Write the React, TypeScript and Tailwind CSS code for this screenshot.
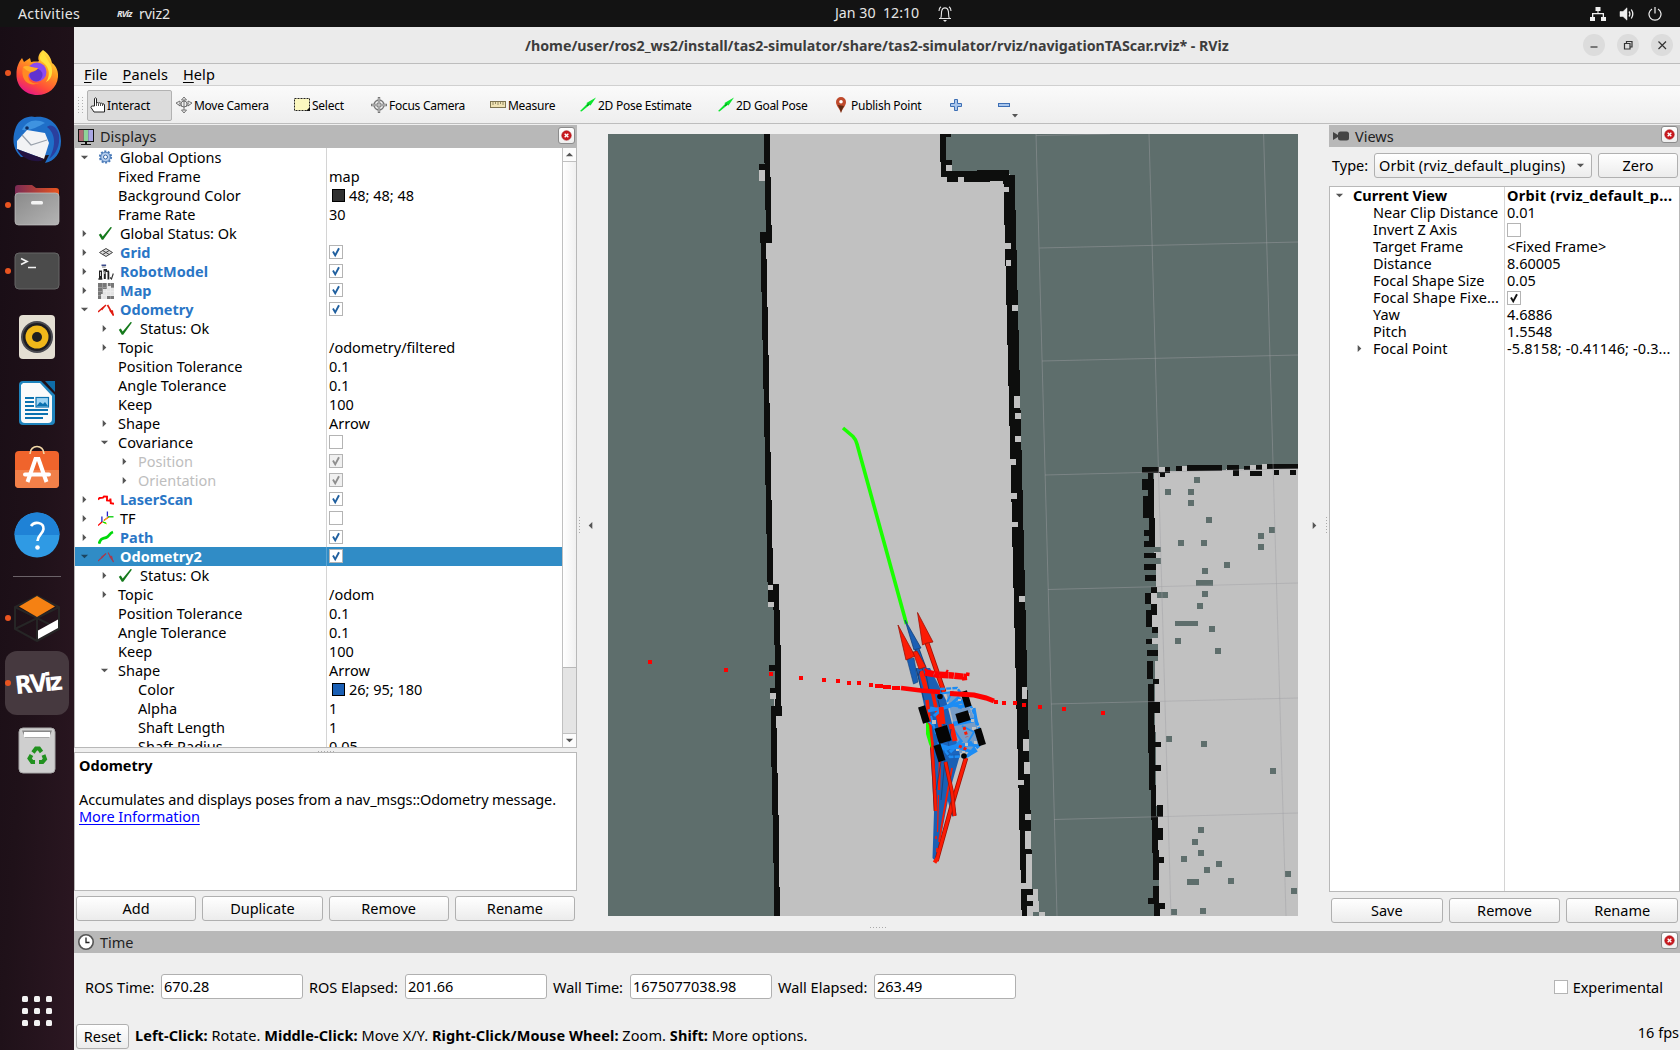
import React from 'react';

type Rect = [number, number, number, number];

/* ---------- small shared pieces ---------- */

function Tri({ dir, cls = 'fill-[#555]' }: { dir: 'right' | 'down' | 'left' | 'up'; cls?: string }) {
  const d = {
    right: 'M3 1 L7 5 L3 9Z',
    left: 'M7 1 L3 5 L7 9Z',
    down: 'M1 3 L9 3 L5 7Z',
    up: 'M1 7 L9 7 L5 3Z',
  }[dir];
  return (
    <svg viewBox="0 0 10 10" className={`h-[9px] w-[9px] shrink-0 ${cls}`}>
      <path d={d} />
    </svg>
  );
}

function Check({ on, tone = 'blue' }: { on: boolean; tone?: 'blue' | 'grey' | 'black' }) {
  const stroke = { blue: '#1f5f9f', grey: '#8e8e8e', black: '#111' }[tone];
  return (
    <span className={`block h-[14px] w-[14px] shrink-0 border border-[#b4b4b4] ${tone === 'grey' ? 'bg-[#f0f0f0]' : 'bg-white'}`}>
      {on && (
        <svg viewBox="0 0 12 12" className="h-3 w-3">
          <path d="M3 5.6 L5.2 9.4 L9 2.2" fill="none" stroke={stroke} strokeWidth="1.9" />
        </svg>
      )}
    </span>
  );
}

function Button({ label, cls }: { label: string; cls: string }) {
  return (
    <button className={`flex h-[25px] items-center justify-center rounded-[3px] border border-[#b0b0b0] bg-gradient-to-b from-white to-[#ececec] ${cls}`}>
      {label}
    </button>
  );
}

function CloseButton() {
  return (
    <span className="mb-[3px] flex h-[17px] w-[17px] items-center justify-center rounded-[3px] border border-[#8c8c8c] bg-gradient-to-b from-white to-[#eee]">
      <svg viewBox="0 0 12 12" className="h-[11px] w-[11px]">
        <circle cx="6" cy="6" r="5.2" fill="#c9191e" stroke="#a40f12" strokeWidth=".6" />
        <path d="M4 4 L8 8 M8 4 L4 8" stroke="#fff" strokeWidth="1.5" />
      </svg>
    </span>
  );
}

function PanelTitle({ icon, title, cls = 'h-[22px]' }: { icon: React.ReactNode; title: string; cls?: string }) {
  return (
    <div className={`flex shrink-0 items-center bg-[#b8b8b8] pl-[3px] pr-[2px] text-[#222] ${cls}`}>
      {icon}
      <span className="ml-[5px] flex-1">{title}</span>
      <CloseButton />
    </div>
  );
}

/* ---------- display type icons ---------- */

const box = 'h-4 w-4 shrink-0';

const icons: Record<string, React.ReactNode> = {
  gear: (
    <svg viewBox="0 0 16 16" className={box}>
      <circle cx="7.5" cy="7" r="5.6" fill="#a9c3e8" stroke="#4a7ab8" strokeWidth="2" strokeDasharray="2 1.5" />
      <circle cx="7.5" cy="7" r="4.6" fill="#b8d0f0" stroke="#4878b4" strokeWidth=".8" />
      <circle cx="7.5" cy="7" r="2" fill="#fff" stroke="#3465a4" strokeWidth="1" />
    </svg>
  ),
  ok: (
    <svg viewBox="0 0 16 16" className={box}>
      <path d="M.8 8.8 L2.8 7.6 L4.7 10.4 L12.6 1 L14 1.4 L5.2 13.8 L3.8 13.8Z" fill="#157a1c" />
    </svg>
  ),
  grid: (
    <svg viewBox="0 0 16 16" className={box}>
      <path d="M1.5 7.5 L8 3.5 L14.5 7.5 L8 11.5Z M4.7 5.5 L11.2 9.5 M11.2 5.5 L4.7 9.5" fill="#ddd" stroke="#444" strokeWidth="1" />
    </svg>
  ),
  robot: (
    <svg viewBox="0 0 16 16" className={box}>
      <path d="M3.5 .5 h4.600 v1.600 h-4.600z" fill="#3a4a8a" />
      <path d="M4 2 h3.600 v2 h-3.600z" fill="#bbb" />
      <path d="M1 6.500 h3 v9 h-3z M5.500 5 h3.500 v3 h-3.500z M5.800 8 h2 v7 h-2z M9.500 7.500 h1.800 v8 h-1.800z M8 6.500 h3 v1.500 h-3z" fill="#222" />
      <path d="M2.500 8 v4 M6.800 7 v3" stroke="#ccc" strokeWidth="1" />
      <path d="M0 15 h4.500 M12 13.500 l1.500 1.500 l1.800-5.500" fill="none" stroke="#333" strokeWidth="1.100" />
    </svg>
  ),
  map: (
    <svg viewBox="0 0 16 16" className={box} shapeRendering="crispEdges">
      <path d="M0 0h16v16H0z" fill="#e4e4e4" />
      <path d="M0 0h9v6H5v5H3v5H0z M10 0h6v5h-3v-2h-3z M9 13h7v3H9z" fill="#777" />
      <path d="M4 0v16M8 0v16M12 0v16M0 4h16M0 8h16M0 12h16" stroke="#fff" strokeOpacity=".25" />
    </svg>
  ),
  odom: (
    <svg viewBox="0 0 16 16" className={box}>
      <path d="M0 10 L8 3" stroke="#e01b10" strokeWidth="1.4" />
      <path d="M4 8.6 L3 6.6 L8.5 2.8Z M11 8.5 L15.8 14 L15 8.2Z" fill="#e01b10" />
      <path d="M9.5 3 L15.500 13.500" stroke="#e01b10" strokeWidth="1.6" />
    </svg>
  ),
  odomDim: (
    <svg viewBox="0 0 16 16" className={box}>
      <path d="M0 12 L8 4.5 M10 3.5 L15.5 13" stroke="#a63c50" strokeWidth="1.2" />
      <path d="M3.5 10 L3.4 7.6 L8.5 4Z M11 7.5 L14 6.8 L15.8 13.5Z" fill="#a63c50" />
    </svg>
  ),
  laser: (
    <svg viewBox="0 0 16 16" className={box}>
      <path d="M0 7.500 L1.500 6 L5 5.600 L6 4.400 L9 4.600 L9 8.500 L12 8.800 L12.400 6.600 L12.800 11.200 L16 11.800" fill="none" stroke="#f00" strokeWidth="1.900" />
    </svg>
  ),
  tf: (
    <svg viewBox="0 0 16 16" className={box}>
      <path d="M0 14.5 L4.5 10.5 M6 9.6 L10.8 5.8" stroke="#f00" strokeWidth="1.3" />
      <path d="M10 5.8 H15.5" stroke="#0c0" strokeWidth="1.3" />
      <path d="M9.4 .6 V5.5 M3.9 5.6 V11" stroke="#22c" strokeWidth="1.3" />
      <path d="M4.5 11 L9 13 M5.5 10 L10.5 6" stroke="#dd0" strokeWidth="1" />
      <path d="M5 11 L8 12.2" stroke="#0d0" strokeWidth="1.3" />
    </svg>
  ),
  path: (
    <svg viewBox="0 0 16 16" className={box}>
      <path d="M1 13.8 C2.500 7.500 5 8.800 8 7.600 C12 6 11 3.400 15 2" fill="none" stroke="#00d80a" strokeWidth="2.8" />
    </svg>
  ),
};

/* ---------- displays tree ---------- */

type Row = {
  l: 0 | 1 | 2;
  name: string;
  a?: 'right' | 'down';
  icon?: string;
  v?: string;
  c?: boolean;
  sw?: string;
  style?: 'link' | 'sel' | 'dim';
};

const rows: Row[] = [
  { l: 0, name: 'Global Options', a: 'down', icon: 'gear' },
  { l: 1, name: 'Fixed Frame', v: 'map' },
  { l: 1, name: 'Background Color', v: '48; 48; 48', sw: 'bg-[#303030]' },
  { l: 1, name: 'Frame Rate', v: '30' },
  { l: 0, name: 'Global Status: Ok', a: 'right', icon: 'ok' },
  { l: 0, name: 'Grid', a: 'right', icon: 'grid', c: true, style: 'link' },
  { l: 0, name: 'RobotModel', a: 'right', icon: 'robot', c: true, style: 'link' },
  { l: 0, name: 'Map', a: 'right', icon: 'map', c: true, style: 'link' },
  { l: 0, name: 'Odometry', a: 'down', icon: 'odom', c: true, style: 'link' },
  { l: 1, name: 'Status: Ok', a: 'right', icon: 'ok' },
  { l: 1, name: 'Topic', a: 'right', v: '/odometry/filtered' },
  { l: 1, name: 'Position Tolerance', v: '0.1' },
  { l: 1, name: 'Angle Tolerance', v: '0.1' },
  { l: 1, name: 'Keep', v: '100' },
  { l: 1, name: 'Shape', a: 'right', v: 'Arrow' },
  { l: 1, name: 'Covariance', a: 'down', c: false },
  { l: 2, name: 'Position', a: 'right', c: true, style: 'dim' },
  { l: 2, name: 'Orientation', a: 'right', c: true, style: 'dim' },
  { l: 0, name: 'LaserScan', a: 'right', icon: 'laser', c: true, style: 'link' },
  { l: 0, name: 'TF', a: 'right', icon: 'tf', c: false },
  { l: 0, name: 'Path', a: 'right', icon: 'path', c: true, style: 'link' },
  { l: 0, name: 'Odometry2', a: 'down', icon: 'odomDim', c: true, style: 'sel' },
  { l: 1, name: 'Status: Ok', a: 'right', icon: 'ok' },
  { l: 1, name: 'Topic', a: 'right', v: '/odom' },
  { l: 1, name: 'Position Tolerance', v: '0.1' },
  { l: 1, name: 'Angle Tolerance', v: '0.1' },
  { l: 1, name: 'Keep', v: '100' },
  { l: 1, name: 'Shape', a: 'down', v: 'Arrow' },
  { l: 2, name: 'Color', v: '26; 95; 180', sw: 'bg-[#1a5fb4]' },
  { l: 2, name: 'Alpha', v: '1' },
  { l: 2, name: 'Shaft Length', v: '1' },
  { l: 2, name: 'Shaft Radius', v: '0.05' },
];

const indent = ['pl-0', 'pl-5', 'pl-10'];

function TreeRow({ r }: { r: Row }) {
  const text =
    r.style === 'link' ? 'font-bold text-[#2a76c6]' : r.style === 'sel' ? 'font-bold text-white' : r.style === 'dim' ? 'text-[#bebebe]' : '';
  return (
    <div className={`flex h-[19px] shrink-0 items-center whitespace-nowrap ${r.style === 'sel' ? 'bg-[#308cc6]' : ''}`}>
      <div className={`flex h-full w-[251px] items-center ${indent[r.l]}`}>
        <span className="mr-1 flex w-[19px] justify-center">
          {r.a && <Tri dir={r.a} cls={r.style === 'sel' ? 'fill-[#1c4560]' : 'fill-[#555]'} />}
        </span>
        {r.icon && <span className="mr-1.5">{icons[r.icon]}</span>}
        <span className={text}>{r.name}</span>
      </div>
      <div className={`flex h-full flex-1 items-center border-l pl-[2px] ${r.style === 'sel' ? 'border-[#5aa4d3]' : 'border-[#d4d4d4]'}`}>
        {r.c !== undefined && <span className="mb-px"><Check on={r.c} tone={r.style === 'dim' ? 'grey' : 'blue'} /></span>}
        {r.sw && <span className={`ml-[3px] mr-1 h-[13px] w-[13px] border border-black ${r.sw}`} />}
        {r.v}
      </div>
    </div>
  );
}

function Dots({ cls }: { cls: string }) {
  return (
    <div className={`flex gap-[2px] ${cls}`}>
      {[0, 1, 2, 3, 4, 5].map((i) => (
        <span key={i} className="h-px w-px bg-[#aaa]" />
      ))}
    </div>
  );
}

function DisplaysPanel() {
  return (
    <div className="flex w-[503px] shrink-0 flex-col">
      <PanelTitle
        cls="h-[23px]"
        title="Displays"
        icon={
          <svg viewBox="0 0 18 18" className="h-[18px] w-[18px]">
            <rect x="1" y="1" width="16" height="13" fill="#111" />
            <rect x="2" y="2" width="4.700" height="11" fill="#b06a74" />
            <rect x="6.700" y="2" width="4.600" height="11" fill="#8fd39a" />
            <rect x="11.300" y="2" width="4.700" height="11" fill="#a9a6e4" />
            <path d="M8 14h2v2h4v1H4v-1h4z" fill="#111" />
          </svg>
        }
      />
      <div className="flex h-[600px] shrink-0 border-b border-l border-r border-[#b8b8b8] bg-white">
        <div className="flex flex-1 flex-col overflow-hidden">
          {rows.map((r, i) => (
            <TreeRow key={i} r={r} />
          ))}
        </div>
        <div className="flex w-[14px] flex-col border-l border-[#c0c0c0] bg-[#e4e4e4]">
          <div className="flex h-[14px] items-center justify-center border-b border-[#c0c0c0] bg-[#fcfcfc]">
            <Tri dir="up" />
          </div>
          <div className="h-[506px] border-b border-[#b8b8b8] bg-gradient-to-r from-white to-[#f0f0f0]" />
          <div className="flex-1" />
          <div className="flex h-[14px] items-center justify-center border-t border-[#c0c0c0] bg-[#fcfcfc]">
            <Tri dir="down" />
          </div>
        </div>
      </div>
      <Dots cls="h-[4px] items-end justify-center" />
      <div className="h-[139px] shrink-0 border border-[#b8b8b8] bg-white pl-1 pt-[4px] leading-[17px]">
        <div className="font-bold">Odometry</div>
        <div className="mt-[17px] whitespace-nowrap tracking-[-0.11px]">
          Accumulates and displays poses from a nav_msgs::Odometry message.
        </div>
        <a className="tracking-[-0.05px] text-[#0000ff] underline underline-offset-2">More Information</a>
      </div>
      <div className="mt-[5px] flex gap-[6px] pl-[2px] pr-[2px]">
        {['Add', 'Duplicate', 'Remove', 'Rename'].map((b) => (
          <Button key={b} label={b} cls="flex-1" />
        ))}
      </div>
    </div>
  );
}

/* ---------- 3D viewport ---------- */

const G = '#c1c1c1';
const K = '#0d0e0d';
const T = '#5e6e6c';

const leftWall: Rect[] = [
  [764, 134, 770, 163], [765, 163, 770, 177], [765, 177, 771, 210], [766, 210, 771, 225], [766, 225, 772, 232],
  [759, 164, 765, 170], [760, 232, 772, 243], [761, 243, 766, 259], [761, 259, 767, 292], [762, 292, 767, 307],
  [762, 307, 768, 340], [763, 340, 768, 355], [763, 355, 769, 389], [764, 389, 769, 403], [764, 403, 770, 437],
  [765, 437, 770, 452], [765, 452, 771, 485], [766, 485, 771, 500], [766, 500, 772, 534], [767, 534, 772, 548],
  [767, 548, 773, 582], [768, 582, 773, 607], [773, 584, 779, 610], [774, 610, 780, 645], [775, 645, 781, 706],
  [769, 665, 775, 671], [770, 688, 776, 693], [771, 706, 782, 716], [771, 716, 776, 728], [771, 728, 777, 767],
  [772, 767, 777, 773], [772, 773, 778, 815], [773, 815, 779, 863], [774, 863, 779, 887], [774, 887, 780, 916],
];
const rightWall: Rect[] = [
  [940, 134, 946, 162], [946, 134, 951, 137], [941, 160, 946, 177], [946, 160, 952, 165], [941, 171, 1009, 177],
  [977, 170, 1009, 172], [947, 177, 990, 182], [990, 177, 1003, 181], [1003, 175, 1015, 184], [1004, 184, 1015, 210],
  [1004, 210, 1016, 225], [1005, 225, 1016, 250], [1005, 250, 1017, 266], [1006, 266, 1017, 290], [1006, 290, 1018, 305],
  [1007, 305, 1018, 330], [1007, 330, 1019, 345], [1008, 345, 1019, 370], [1008, 370, 1020, 386], [1009, 386, 1020, 410],
  [1009, 410, 1021, 426], [1010, 426, 1021, 450], [1010, 450, 1022, 465], [1011, 465, 1022, 490], [1011, 490, 1023, 502],
  [1012, 502, 1023, 530], [1012, 530, 1024, 547], [1013, 547, 1024, 570], [1013, 570, 1025, 588], [1014, 588, 1025, 610],
  [1014, 610, 1026, 628], [1015, 628, 1026, 650], [1015, 650, 1027, 668], [1016, 668, 1027, 690], [1016, 690, 1028, 709],
  [1017, 709, 1028, 730], [1017, 730, 1029, 749], [1018, 749, 1029, 770], [1018, 770, 1030, 788], [1019, 788, 1030, 810],
  [1019, 810, 1031, 830], [1020, 830, 1031, 850], [1020, 850, 1032, 870], [1021, 870, 1027, 883], [1021, 889, 1033, 895],
  [1021, 895, 1027, 910], [1022, 906, 1027, 916], [1027, 901, 1033, 906],
];
const notches: Rect[] = [
  [759, 170, 765, 181], [768, 585, 773, 590], [768, 602, 774, 607], [770, 693, 776, 699],
  [946, 165, 952, 171], [958, 177, 964, 182], [1004, 187, 1009, 192], [1005, 243, 1011, 249], [1006, 260, 1011, 266],
  [1012, 305, 1018, 311], [1014, 396, 1020, 408], [1015, 413, 1021, 419], [1015, 436, 1021, 442], [1010, 459, 1016, 465],
  [1011, 493, 1017, 499], [1012, 522, 1018, 527], [1019, 596, 1025, 602], [1022, 687, 1027, 699], [1023, 739, 1029, 751],
  [1024, 762, 1030, 774], [1018, 780, 1024, 785], [1025, 814, 1031, 820], [1025, 831, 1031, 849], [1026, 854, 1032, 889],
  [1021, 883, 1027, 889],
];
const rightGrey: Rect[] = [[1022, 889, 1038, 901], [1027, 901, 1039, 916], [1039, 912, 1045, 916]];
const roomWall: Rect[] = [
  [1142, 467, 1170, 473], [1160, 473, 1165, 477], [1176, 466, 1182, 471], [1187, 465, 1222, 471], [1227, 465, 1239, 470],
  [1233, 470, 1239, 476], [1244, 466, 1250, 470], [1256, 465, 1262, 470], [1250, 471, 1262, 476], [1267, 464, 1298, 469],
  [1274, 470, 1279, 475], [1290, 470, 1296, 475], [1148, 473, 1153, 479], [1142, 479, 1154, 490], [1143, 490, 1154, 518],
  [1149, 518, 1155, 530], [1144, 530, 1155, 547], [1144, 553, 1156, 558], [1144, 564, 1156, 570], [1145, 575, 1156, 581],
  [1151, 587, 1157, 593], [1145, 593, 1151, 604], [1151, 604, 1157, 615], [1146, 610, 1152, 627], [1152, 627, 1158, 633],
  [1146, 639, 1152, 644], [1147, 650, 1158, 656], [1147, 661, 1153, 679], [1153, 679, 1159, 684], [1148, 684, 1154, 753],
  [1148, 702, 1160, 713], [1155, 742, 1161, 747], [1149, 725, 1155, 790], [1155, 765, 1161, 771], [1151, 785, 1156, 820],
  [1157, 805, 1163, 817], [1152, 816, 1158, 853], [1157, 828, 1163, 840], [1153, 850, 1159, 880], [1158, 857, 1164, 863],
  [1153, 886, 1159, 904], [1148, 898, 1153, 904], [1154, 903, 1160, 916], [1159, 903, 1165, 909],
];
const roomTeal: Rect[] = [
  [1142, 490, 1148, 496], [1144, 536, 1149, 541], [1140, 547, 1161, 552], [1140, 558, 1161, 564], [1140, 570, 1156, 575],
  [1140, 581, 1156, 587], [1157, 592, 1168, 598], [1140, 633, 1158, 639], [1152, 644, 1158, 650], [1140, 656, 1158, 661],
  [1153, 880, 1159, 886], [1196, 580, 1213, 586], [1175, 621, 1198, 626], [1187, 879, 1199, 885],
];
const roomGrey: Rect[] = [
  [1159, 467, 1165, 472], [1182, 466, 1187, 471], [1250, 465, 1256, 470], [1262, 464, 1267, 469],
  [1151, 593, 1157, 604], [1152, 615, 1158, 627], [1152, 638, 1158, 644],
];
const specks: [number, number][] = [
  [1194, 477], [1165, 489], [1188, 489], [1188, 500], [1206, 517], [1178, 540], [1201, 540], [1258, 533], [1258, 544],
  [1269, 527], [1224, 562], [1202, 568], [1202, 591], [1197, 603], [1209, 626], [1175, 638], [1215, 648], [1166, 736],
  [1201, 741], [1270, 768], [1198, 827], [1192, 839], [1198, 850], [1181, 856], [1216, 861], [1204, 867], [1228, 878],
  [1285, 871], [1291, 888], [1171, 909], [1200, 908],
];
const gridLines: Rect[] = [
  [1036, 134, 1057, 916], [1149, 134, 1171, 916], [1263.6, 134, 1286, 916], [1036, 135.6, 1110, 134], [1039.5, 248, 1298, 242],
  [1042, 361, 1298, 355], [1045, 475, 1298, 468.5], [1048, 589.5, 1298, 583], [1051, 704, 1298, 698], [1054, 819.5, 1298, 813],
];
const scan: [number, number][] = [
  [650, 662], [726, 670], [771, 674], [801, 678], [824, 680], [838, 681], [849, 683], [859, 683], [871, 685], [877, 686],
  [881, 686], [885, 687], [889, 687], [894, 688], [898, 688], [996, 702], [1004, 703], [1015, 703], [1024, 705], [1040, 707],
  [1064, 709], [1103, 713],
];

function Rects({ list, fill }: { list: Rect[]; fill: string }) {
  return (
    <g fill={fill}>
      {list.map(([a, b, c, d], i) => (
        <rect key={i} x={a} y={b} width={c - a} height={d - b} />
      ))}
    </g>
  );
}

function Arrow({ tip, base, end, color, dark }: { tip: string; base: string; end: string; color: string; dark: string }) {
  const [p, q, r] = base.split(' ');
  return (
    <g>
      <path d={`M${q} L${end}`} stroke={dark} strokeWidth="5" />
      <path d={`M${q} L${end}`} stroke={color} strokeWidth="3.4" />
      <path d={`M${tip} L${p} L${q} L${r}Z`} fill={color} stroke={dark} strokeWidth=".8" />
    </g>
  );
}

function Robot() {
  const red = '#fb1b04';
  const blue = '#1a5fb4';
  const dr = '#9c1206';
  const db = '#123f78';
  return (
    <g>
      {/* accumulated pose arrows behind the car */}
      <path d="M916 668 L930 668 L946 700 L960 755 L950 790 L936 862 L932.5 858 L934 812 L930 742 L924 705Z" fill={blue} />
      <g fill="none">
        <path d="M945 790 L952 790 L956.5 815 L952 816.500Z" fill={blue} />
        <path d="M966 758 L952 805 L936.500 861" stroke={dr} strokeWidth="4.600" />
        <path d="M966 758 L952 805 L936.500 861" stroke={red} strokeWidth="3" />
        <path d="M931.500 742 L934 780 L935.500 811" stroke={dr} strokeWidth="3.600" />
        <path d="M931.800 742 L934.300 780 L935.800 811" stroke={red} strokeWidth="2.600" />
        <path d="M940 758 L939 790" stroke={red} strokeWidth="2.400" />
        <path d="M938.500 795 L937.500 832" stroke={red} strokeWidth="1.200" />
        <path d="M952 768 L945 806 L939 842" stroke={red} strokeWidth="1.800" />
        <path d="M936 790 L941 762 M945 760 L941 800" stroke={db} strokeWidth=".8" />
        <path d="M945.500 762 L952 792 L954.500 816" stroke={dr} strokeWidth="4" />
        <path d="M945.500 762 L952 792 L954.500 816" stroke={red} strokeWidth="2.600" />
        <path d="M936 836 V839 M937 848 V852" stroke={red} strokeWidth="1.600" />
        <path d="M937.500 858 L934.500 862.600" stroke={red} strokeWidth="4" />
        <path d="M927 700 L932 745 M932 690 L942 735" stroke={red} strokeWidth="3.600" />
        <path d="M916 668 L924 700 M938 700 L950 750" stroke={db} strokeWidth="1" />
      </g>
      <path d="M926 721 L929 725 L931.5 749 L929 744 L926 734Z" fill="#1aff00" />
      <Arrow tip="905,620" base="914,650 917,649 921,648" end="927,676" color={blue} dark={db} />
      <path d="M907 659 L913.5 684 L918 682 L914 658Z" fill={blue} stroke={db} strokeWidth=".6" />
      <path d="M898 625 L906 660 L915 656Z" fill={red} stroke={dr} strokeWidth=".8" />
      <path d="M913 652 L919 669 L926 667 L917 651Z" fill={red} stroke={dr} strokeWidth=".7" />
      <path d="M921 671 L927 692" stroke={red} strokeWidth="4.600" />
      <path d="M920 671 L918 676 M925 669 L929 690" stroke={db} strokeWidth="1" />
      <Arrow tip="917.5,612.5" base="922.5,645 927,643 933,642" end="944,692" color={red} dark={dr} />

      {/* chassis */}
      <g stroke="#1c8cf4" fill="none">
        <path d="M946 692 L958 694 L970 708 L977 725 L979 744 L968 752 L950 755 L942 745 L954 726Z" fill="#1a6fce" fillOpacity=".45" stroke="none" />
        <path d="M940 689 L957 688 L972 708 L979 728 L981 744 L968 756 L950 757 L938 742" strokeWidth="2.4" strokeDasharray="5 1.2" />
        <path d="M958 707 L971 705 M974 708 L977 725 M960 748 L972 752" strokeWidth="3" />
        <path d="M928 711 L948 707 L966 700 M934 716 Q950 700 962 708 M930 708 Q944 712 958 698 L966 706" strokeWidth="3" />
        <path d="M940 745 Q956 752 972 742 M944 750 Q960 742 978 746 M950 752 L962 740" strokeWidth="3.2" />
        <path d="M953 724 L974 720" strokeWidth="4.6" />
        <path d="M927 720 L934 726 M931 716 L936 734 M938 694 L952 692 L947 702" strokeWidth="2" />
        <path d="M962 726 L974 732 L968 742 M953 728 L962 742" strokeWidth="1.8" />
        <path d="M974 748 L966 757 L976 751Z" strokeWidth="2.5" />
      </g>
      <path
        d="M932 720h4v4h-4z M967 713h3v3h-3z M971 719h3v3h-3z M972 727h4v3h-4z M965 743h3v3h-3z M958 699h3v2h-3z M956 749h3v2h-3z M974 741h3v3h-3z M962 751h3v2h-3z"
        fill={G}
      />
      <path d="M941 707 L943 724 M951 724 L955 741" stroke={red} strokeWidth="5" />
      <path d="M951 729 L949 742" stroke={db} strokeWidth="1" />
      <path d="M964 727 L967 737 M959 746 L968 750" stroke={red} strokeWidth="3" strokeDasharray="3 2" />
      <g fill="#050505">
        <rect x="-3.6" y="-8.5" width="7.2" height="17" transform="translate(924 714.5) rotate(-17)" />
        <rect x="-3.4" y="-8" width="6.8" height="16" transform="translate(966 699) rotate(-17)" />
        <rect x="-3.6" y="-8.5" width="7.2" height="17" transform="translate(980 737) rotate(-17)" />
        <rect x="-3.6" y="-8.5" width="7.2" height="17" transform="translate(939.5 753) rotate(-17)" />
        <rect x="-6.5" y="-8" width="13" height="16" transform="translate(943 734.5) rotate(-17)" />
        <rect x="-6.5" y="-5" width="13" height="10" transform="translate(963 717) rotate(-17)" />
        <circle cx="940" cy="696.5" r="2.8" />
        <circle cx="964" cy="756" r="2.8" />
      </g>
    </g>
  );
}

function Viewport() {
  return (
    <svg viewBox="608 134 690 782" className="mt-[9px] h-[782px] w-[690px] shrink-0">
      <g shapeRendering="crispEdges">
        <rect x="608" y="134" width="690" height="782" fill={T} />
        <path d="M768 134 H943 V174 H1010 L1026 889 V916 H778 L774 720 L776 600 H770 L765 300 V240 H768Z" fill={G} />
        <path d="M1154 472 L1298 467 V916 H1158 L1154 620Z" fill={G} />
        <Rects list={rightGrey} fill={G} />
        <Rects list={leftWall} fill={K} />
        <Rects list={rightWall} fill={K} />
        <Rects list={notches} fill={G} />
        <Rects list={[[1033, 912, 1039, 916]]} fill={T} />
        <Rects list={roomWall} fill={K} />
        <Rects list={roomTeal} fill={T} />
        <Rects list={roomGrey} fill={G} />
        <Rects list={specks.map(([x, y]) => [x, y, x + 6, y + 6] as Rect)} fill={T} />
      </g>
      <g stroke="#a0a0a4" strokeOpacity=".45" strokeWidth="1">
        {gridLines.map(([a, b, c, d], i) => (
          <line key={i} x1={a} y1={b} x2={c} y2={d} />
        ))}
      </g>
      <path d="M843 428 L853 436.500 Q855.500 439 857 444 L906.500 624" fill="none" stroke="#1aff00" strokeWidth="3.6" />
      <Robot />
      <g fill="#f00" shapeRendering="crispEdges">
        {scan.map(([x, y], i) => (
          <rect key={i} x={x - 2} y={y - 2} width="4" height="4" />
        ))}
      </g>
      <path d="M901 688 L921 690.5 L940 692" stroke="#f00" strokeWidth="4.6" fill="none" />
      <path d="M950 693.5 L974 695 L986 698 L994 701" stroke="#f00" strokeWidth="5" fill="none" />
      <path d="M925 672.500 L936 674.500 L952 675.500 L967 677" stroke="#f00" strokeWidth="6.5" strokeDasharray="9 .3 5 .5" fill="none" />
      <path d="M925 671 L927 669 M946 671 L948 672 M966 674 L969.5 674.5 M962 679 L967 678" stroke="#f00" strokeWidth="3.6" />
    </svg>
  );
}

/* ---------- views panel ---------- */

const views: { name: string; v?: string; c?: boolean; head?: boolean; a?: 'right' | 'down' }[] = [
  { name: 'Current View', v: 'Orbit (rviz_default_p...', head: true, a: 'down' },
  { name: 'Near Clip Distance', v: '0.01' },
  { name: 'Invert Z Axis', c: false },
  { name: 'Target Frame', v: '<Fixed Frame>' },
  { name: 'Distance', v: '8.60005' },
  { name: 'Focal Shape Size', v: '0.05' },
  { name: 'Focal Shape Fixe...', c: true },
  { name: 'Yaw', v: '4.6886' },
  { name: 'Pitch', v: '1.5548' },
  { name: 'Focal Point', v: '-5.8158; -0.41146; -0.3...', a: 'right' },
];

function ViewsPanel() {
  return (
    <div className="flex w-[351px] shrink-0 flex-col">
      <PanelTitle
        title="Views"
        icon={
          <svg viewBox="0 0 18 12" className="h-[12px] w-[18px]">
            <path d="M1 2 L6 5 V7 L1 10Z" fill="#444" />
            <rect x="6" y="1.600" width="11" height="9" rx="2.500" fill="#444" />
          </svg>
        }
      />
      <div className="mt-[6px] flex items-center pl-[3px] pr-[2px]">
        <span className="w-[42px]">Type:</span>
        <span className="mr-[6px] flex h-[25px] w-[218px] items-center justify-between rounded-[3px] border border-[#b0b0b0] bg-gradient-to-b from-white to-[#ececec] pl-[4px] pr-[6px] tracking-[0.12px]">
          Orbit (rviz_default_plugins)
          <Tri dir="down" />
        </span>
        <Button label="Zero" cls="flex-1" />
      </div>
      <div className="mt-[8px] flex h-[706px] flex-col border border-[#b8b8b8] bg-white">
        {views.map((r) => (
          <div key={r.name} className="flex h-[17px] items-center whitespace-nowrap">
            <div className={`flex w-[174px] items-center ${r.head ? 'pl-0' : 'pl-5'}`}>
              <span className="mr-1 flex w-[19px] justify-center">{r.a && <Tri dir={r.a} />}</span>
              <span className={r.head ? 'font-bold' : r.name.endsWith('...') ? 'tracking-[0.15px]' : ''}>{r.name}</span>
            </div>
            <div className={`flex h-full flex-1 items-center border-l border-[#d4d4d4] pl-[2px] ${r.head ? 'font-bold tracking-[0.3px]' : r.a ? 'tracking-[0.12px]' : ''}`}>
              {r.c !== undefined && <Check on={r.c} tone="black" />}
              {r.v}
            </div>
          </div>
        ))}
        <div className="ml-[174px] flex-1 border-l border-[#d4d4d4]" />
      </div>
      <div className="mt-[6px] flex gap-[6px] pl-[2px] pr-[2px]">
        {['Save', 'Remove', 'Rename'].map((b) => (
          <Button key={b} label={b} cls="flex-1" />
        ))}
      </div>
    </div>
  );
}

/* ---------- dock ---------- */

function DockItem({ top, running, children }: { top: string; running?: boolean; children: React.ReactNode }) {
  return (
    <div className={`flex shrink-0 items-center ${top}`}>
      <span className={`ml-[5px] h-[6px] w-[6px] rounded-full ${running ? 'bg-[#e95420]' : ''}`} />
      <span className="ml-[2px]">{children}</span>
    </div>
  );
}

const app = 'h-12 w-12';

function Dock() {
  return (
    <aside className="flex w-[74px] shrink-0 flex-col bg-gradient-to-br from-[#180d15] via-[#1f1119] to-[#2c1722]">
      <DockItem running top="mt-[22px] h-12">
        <svg viewBox="0 0 48 48" className={app}>
          <defs>
            <linearGradient id="ff" x1=".8" y1="0" x2=".3" y2="1">
              <stop offset="0" stopColor="#fff04a" />
              <stop offset=".4" stopColor="#ff9a1f" />
              <stop offset=".75" stopColor="#ff4a3a" />
              <stop offset="1" stopColor="#e3158a" />
            </linearGradient>
          </defs>
          <path d="M30 1 C37 6 38 10 39 14 C44 17 45.500 24 45 28 C44 39 35 46 24.500 46 C12 46 3 37 3.500 25 C3.500 19 5 14 9 9 L11 13 L17 9 L18 13 C22 12 25 13 26 12 C24 8 27 3 30 1Z" fill="url(#ff)" />
          <path d="M28 12 C38 18 37 28 33 33 C40 30 41 19 36 13 L30 3 C27 6 26 9 28 12Z" fill="#ffe23e" />
          <circle cx="24" cy="23" r="9.500" fill="#8a4bf0" />
          <circle cx="23" cy="26" r="6.500" fill="#5f33d0" />
          <path d="M10 18 C14 15 18 19 25 19 C23 23 19 22 16 25 C13 31 20 36 26 34 C15 39 7 30 10 18Z" fill="#ff8a24" />
          <path d="M10 18 C14 15 18 19 25 19 C23 22 20 22 17 23 C14 22 12 20 10 18Z" fill="#ffb02a" />
        </svg>
      </DockItem>
      <DockItem top="mt-[18px] h-12">
        <svg viewBox="0 0 48 48" className={app}>
          <path d="M3 12 C6 4 16 0 22 2 C36 0 48 10 48 26 C48 38 42 46 32 48 L36 40 L8 42 C-1 34 -1 22 3 12Z" fill="#1f6fc8" />
          <path d="M34 12 C42 18 44 30 36 44 C44 38 47 30 46 20 C44 12 38 8 34 12Z" fill="#2a3f9e" />
          <path d="M4 26 L14 15 L32 18 L36 28 L31 44 L4 34Z" fill="#f2f3f5" />
          <path d="M9 20 L18 30 L34 25" fill="none" stroke="#9aa2ac" strokeWidth="1.200" />
          <path d="M9 15 C13 6 22 3 32 8 C24 12 18 16 9 15Z" fill="#3f93e0" />
          <path d="M4 34 L31 44 L28 46 C18 47 8 43 4 34Z" fill="#231341" />
          <circle cx="14" cy="13" r="1.800" fill="#0f2a5c" />
        </svg>
      </DockItem>
      <DockItem running top="mt-[18px] h-12">
        <svg viewBox="0 0 48 48" className={app}>
          <defs>
            <linearGradient id="fo" x2="1">
              <stop offset="0" stopColor="#7a2a54" />
              <stop offset="1" stopColor="#e8551f" />
            </linearGradient>
            <linearGradient id="fg" x2="1" y2="1">
              <stop offset="0" stopColor="#8a8a8a" />
              <stop offset="1" stopColor="#b4b4b4" />
            </linearGradient>
          </defs>
          <path d="M2 7 q0-3 3-3 h14 l4 3 h20 q3 0 3 3 v16 H2z" fill="url(#fo)" />
          <rect x="2" y="12" width="44" height="32" rx="3.500" fill="url(#fg)" stroke="#c4c4c4" strokeWidth=".7" />
          <rect x="18" y="20" width="12" height="3.600" rx="1.500" fill="#f4f4f4" />
        </svg>
      </DockItem>
      <DockItem running top="mt-[18px] h-12">
        <svg viewBox="0 0 48 48" className={app}>
          <rect x="2" y="6" width="44" height="36" rx="4" fill="#4b4b4b" stroke="#666" strokeWidth="1" />
          <path d="M8 11.500 L14 14.500 L8 17.500 M15 20.500 H23" fill="none" stroke="#f2f2f2" strokeWidth="1.700" />
        </svg>
      </DockItem>
      <DockItem top="mt-[18px] h-12">
        <svg viewBox="0 0 48 48" className={app}>
          <rect x="6" y="2" width="36" height="44" rx="4" fill="#e4dfd3" />
          <circle cx="24" cy="24" r="16" fill="#4a4a50" />
          <circle cx="24" cy="24" r="14" fill="#1d1d22" />
          <circle cx="24" cy="24" r="11.500" fill="#f0b81a" />
          <circle cx="24" cy="24" r="5" fill="#1f1f1f" />
        </svg>
      </DockItem>
      <DockItem top="mt-[18px] h-12">
        <svg viewBox="0 0 48 48" className={app}>
          <path d="M10 2 H28 L42 16 V42 q0 4-4 4 H10 q-4 0-4-4 V6 q0-4 4-4z" fill="#1f84bd" />
          <path d="M10 4 H27 L39 17 V40 q0 4-4 4 H12 q-4 0-4-4 V6z" fill="#fafafa" />
          <path d="M32 2 H42 V13Z" fill="#0f6da8" />
          <path d="M12 19 h9 M12 23 h9 M12 27 h9 M12 31 h23 M12 35 h23 M12 39 h18" stroke="#0b72b0" strokeWidth="1.800" />
          <rect x="23" y="18.500" width="12.500" height="9.500" fill="#9fd4f2" stroke="#0b72b0" strokeWidth="1.200" />
          <path d="M23.500 27 L27 23 L30 25 L32 23 L35 27Z" fill="#0b72b0" />
        </svg>
      </DockItem>
      <DockItem top="mt-[18px] h-12">
        <svg viewBox="0 0 48 48" className={app}>
          <rect x="2" y="6" width="44" height="37" rx="4" fill="#f0642c" />
          <path d="M2 25 H46 V39 q0 4-4 4 H6 q-4 0-4-4z" fill="#f28049" />
          <path d="M17 9 C17 -1 31 -1 31 9" fill="none" stroke="#f3d9a8" strokeWidth="1.600" />
          <path d="M14.500 37 L22.500 14 H25.500 L33.500 37" fill="none" stroke="#fff" strokeWidth="4" />
          <path d="M12 29.500 H36" stroke="#fff" strokeWidth="4" strokeLinecap="round" />
        </svg>
      </DockItem>
      <DockItem top="mt-[18px] h-12">
        <svg viewBox="0 0 48 48" className={app}>
          <circle cx="24" cy="24" r="22.500" fill="#2f9ae4" />
          <path d="M1.500 24 a22.500 22.500 0 0 1 45 0z" fill="#1f82d6" />
          <path d="M18 15 C21 10 31 11 30.500 18 C30 23 24.500 24 24.500 30" fill="none" stroke="#fff" strokeWidth="2.600" />
          <circle cx="24.500" cy="36.500" r="2.300" fill="#fff" />
        </svg>
      </DockItem>
      <div className="ml-[13px] mt-[17px] h-px w-12 shrink-0 bg-[#6b6268]" />
      <DockItem running top="mt-[17px] h-12">
        <svg viewBox="0 0 48 48" className={app}>
          <path d="M24 2 L46 13 V35 L24 47 L2 35 V13Z M2 13 L24 24 L46 13 M24 24 V47 M2 35 L24 24 L46 35" fill="none" stroke="#262626" strokeWidth="2" />
          <path d="M24 2 L42 12.500 L24 23 L6 12.500Z" fill="#f58113" />
          <path d="M25 36.500 L45 25.500 V34 L25 45Z" fill="#fff" />
        </svg>
      </DockItem>
      <div className="ml-[5px] mt-[9px] flex h-16 w-16 shrink-0 items-center rounded-xl bg-[#46393f]">
        <span className="h-[6px] w-[6px] rounded-full bg-[#e95420]" />
        <span className="ml-[4px] -rotate-6 font-['DejaVu_Sans_Condensed',sans-serif] text-[25px] font-bold leading-none tracking-[-2.4px] text-white">
          RViz
        </span>
      </div>
      <DockItem top="mt-[12px] h-12">
        <svg viewBox="0 0 48 48" className={app}>
          <rect x="6" y="1" width="36" height="45" rx="4" fill="#cfcfcf" stroke="#a8a8a8" />
          <path d="M9 3.500 h30 l-3 7 h-24z" fill="#888" />
          <path d="M11 5 h26 v5 h-26z" fill="#fff" />
          <g fill="none" stroke="#21911f" strokeWidth="4">
            <path d="M20 25.500 L23 21.500 h3 L28.500 25" />
            <path d="M30.500 28 L32 32 L29.500 35 H26" />
            <path d="M22 35 H19 L16.500 31.500 L18.500 28" />
          </g>
        </svg>
      </DockItem>
      <div className="mb-[24px] ml-[22px] mt-auto grid w-[30px] grid-cols-3 gap-[6px]">
        {Array.from({ length: 9 }, (_, i) => (
          <span key={i} className="h-[6px] w-[6px] rounded-[1.5px] bg-[#f2f2f2]" />
        ))}
      </div>
    </aside>
  );
}

/* ---------- toolbar ---------- */

const greenArrow = (
  <svg viewBox="0 0 16 16" className={box}>
    <path d="M0 14 L7 7 L6.500 6 L16 .5 L10.500 8.500 L9.500 8 L1.500 14.500Z" fill="#0be62c" />
    <path d="M6.500 8.500 L9.500 6 L8 9Z" fill="#067a1a" />
  </svg>
);

const tools: { label: string; w: string; icon: React.ReactNode }[] = [
  {
    label: 'Move Camera',
    w: 'w-[118px]',
    icon: (
      <svg viewBox="0 0 16 16" className={box}>
        <g fill="#eee" stroke="#666" strokeWidth=".9">
          <path d="M8 0 L10.500 3 H5.500Z M8 16 L10.500 13 H5.500Z M0 6 L4 4 V9Z M16 6 L12 4 V9Z" />
          <path d="M3 7 Q8 11 13 7" fill="none" strokeWidth="2.200" />
          <path d="M3 7 Q8 11 13 7" fill="none" stroke="#eee" strokeWidth=".8" />
          <circle cx="8" cy="7" r="3" />
          <path d="M8 3 V13" />
        </g>
      </svg>
    ),
  },
  {
    label: 'Select',
    w: 'w-[77px]',
    icon: (
      <svg viewBox="0 0 16 16" className={box}>
        <rect x=".5" y="1.500" width="15" height="12" fill="#fcf8c0" stroke="#222" strokeDasharray="2 1" />
        <path d="M12 14 L16 10 V14Z" fill="#111" />
      </svg>
    ),
  },
  {
    label: 'Focus Camera',
    w: 'w-[119px]',
    icon: (
      <svg viewBox="0 0 16 16" className={box}>
        <g fill="none" stroke="#777">
          <circle cx="8" cy="8" r="5" strokeWidth="1.300" />
          <circle cx="8" cy="8" r="2.200" strokeWidth="1" />
          <path d="M8 0 V16 M0 8 H16" strokeWidth="2.400" />
          <path d="M8 1 V15 M1 8 H15" stroke="#e8e8e8" strokeWidth=".8" />
        </g>
      </svg>
    ),
  },
  {
    label: 'Measure',
    w: 'w-[90px]',
    icon: (
      <svg viewBox="0 0 16 16" className={box}>
        <rect x=".5" y="4.500" width="15" height="6" fill="#f0e3b4" stroke="#7d7350" />
        <path d="M3 5v3M5.500 5v2M8 5v3M10.500 5v2M13 5v3" stroke="#7d7350" strokeWidth=".8" />
      </svg>
    ),
  },
  { label: '2D Pose Estimate', w: 'w-[138px]', icon: greenArrow },
  { label: '2D Goal Pose', w: 'w-[115px]', icon: greenArrow },
  {
    label: 'Publish Point',
    w: 'w-[117px]',
    icon: (
      <svg viewBox="0 0 16 16" className={box}>
        <path d="M8 16 C7 12 3 9 3 5 A5 5 0 0 1 13 5 C13 9 9 12 8 16Z" fill="#bf4a2c" />
        <path d="M8 16 C7.500 12 5 9 5 8 L11 9 C10 11 8.500 13 8 16Z" fill="#5e2a12" />
        <circle cx="8" cy="4.800" r="1.800" fill="#fff" />
      </svg>
    ),
  },
];

function Toolbar() {
  return (
    <div className="flex h-[38px] items-center border-b border-[#bdbdbd] bg-gradient-to-b from-[#fafafa] to-[#eeeeee] text-[12px] tracking-[-0.27px]">
      <div className="ml-[4px] grid w-[5px] shrink-0 grid-cols-2 gap-[2px]">
        {Array.from({ length: 12 }, (_, i) => (
          <span key={i} className="h-px w-px bg-[#b0b0b0]" />
        ))}
      </div>
      <div className="ml-[4px] mt-px flex h-[31px] w-[85px] shrink-0 items-center rounded-[2px] border border-[#b2b2b2] bg-[#dcdcdc] pl-[2px]">
        <svg viewBox="0 0 16 16" className={box}>
          <path d="M4.500 9 V1.500 q1-1.300 2 0 V6 q1-.8 2 0 q1-.6 2 .3 q1-.5 2 .4 q1.800-.2 2 1.300 V15 H4 L1 10.500 q0-1.800 1.500-1.500z" fill="#fff" stroke="#222" strokeWidth="1" />
          <path d="M6.500 6v3M8.500 6.500v2.500M10.500 6.500v2.500M12.500 7v2" stroke="#222" strokeWidth=".8" />
        </svg>
        <span className="ml-px pt-px tracking-[-0.1px]">Interact</span>
      </div>
      <div className="ml-[4px] mt-px flex">
        {tools.map((t) => (
          <div key={t.label} className={`flex shrink-0 items-center gap-[2px] whitespace-nowrap ${t.w}`}>
            {t.icon}
            <span className="pt-px">{t.label}</span>
          </div>
        ))}
      </div>
      <svg viewBox="0 0 12 12" className="mt-px h-3 w-3 shrink-0">
        <path d="M4.500 .5h3v4h4v3h-4v4h-3v-4h-4v-3h4z" fill="#a9c6ec" stroke="#3c6eb4" />
      </svg>
      <svg viewBox="0 0 12 12" className="ml-[36px] mt-px h-3 w-3 shrink-0">
        <rect x=".5" y="4.500" width="11" height="3" fill="#a9c6ec" stroke="#3c6eb4" />
      </svg>
      <span className="ml-[2px] mt-[23px] flex">
        <svg viewBox="0 0 6 4" className="h-1 w-1.5">
          <path d="M0 0h6L3 3.500z" fill="#555" />
        </svg>
      </span>
    </div>
  );
}

/* ---------- time panel ---------- */

function Field({ label, value, gap }: { label: string; value: string; gap: string }) {
  return (
    <>
      <span className={`shrink-0 whitespace-nowrap pt-0.5 ${gap}`}>{label}</span>
      <span className="flex h-[25px] w-[142px] shrink-0 items-center rounded-[3px] border border-[#b0b0b0] bg-white pl-[2px]">{value}</span>
    </>
  );
}

export default function App() {
  return (
    <div className="flex h-[1050px] w-[1680px] flex-col overflow-hidden bg-[#efefef] font-['Noto_Sans','Open_Sans',sans-serif] text-[14.5px] leading-none text-black">
      <header className="flex h-[27px] shrink-0 items-center bg-[#131313] text-[14.2px] text-[#e6e6e6]">
        <span className="ml-[18px] w-[99px] pt-px tracking-[0.3px]">Activities</span>
        <span className="w-[22px] text-[9px] font-bold italic tracking-[-0.8px]">RViz</span>
        <span className="w-[696px] pt-px tracking-[-0.1px]">rviz2</span>
        <span className="w-[103px] whitespace-pre">Jan 30  12:10</span>
        <svg viewBox="0 0 14 16" className="h-4 w-[14px]" fill="none" stroke="#e6e6e6" strokeWidth="1.1">
          <path d="M1 12.500 H13 M2.500 12.500 C4 10.500 3 7 3.800 4.500 C4.800 1 9.200 1 10.200 4.500 C11 7 10 10.500 11.500 12.500" />
          <path d="M1 5 Q1 2 3 .8 M13 5 Q13 2 11 .8" />
          <path d="M5 14 h4 l-2 2z" fill="#e6e6e6" stroke="none" />
        </svg>
        <div className="ml-auto mr-[18px] flex items-center gap-[13px]">
          <svg viewBox="0 0 16 14" className="h-[14px] w-4" fill="#f0f0f0">
            <path d="M5.500 0h5v4h-2v2H14v4h2v4h-5v-4h1.700V7.200H3.300V10H5v4H0v-4h2V6h5.500V4h-2z" />
          </svg>
          <svg viewBox="0 0 16 14" className="h-[14px] w-4" fill="none" stroke="#f0f0f0" strokeWidth="1.3">
            <path d="M1 4.500h3L8 .8v12.400L4 9.500H1z" fill="#f0f0f0" strokeWidth=".5" />
            <path d="M10 4.500q1.800 2.500 0 5M12.300 2.500q3 4.500 0 9" />
          </svg>
          <svg viewBox="0 0 14 14" className="h-[14px] w-[14px]" fill="none" stroke="#f0f0f0" strokeWidth="1.2">
            <path d="M4 2 A6 6 0 1 0 10 2 M7 0V6.500" />
          </svg>
        </div>
      </header>
      <div className="flex min-h-0 flex-1">
        <Dock />
        <div className="flex min-w-0 flex-1 flex-col">
          <div className="flex h-[37px] shrink-0 items-center border-b border-[#bdbdbd] bg-[#ebebeb]">
            <span className="ml-[451px] whitespace-nowrap pt-0.5 text-[14.22px] font-bold text-[#3d3d3d]">
              /home/user/ros2_ws2/install/tas2-simulator/share/tas2-simulator/rviz/navigationTAScar.rviz* - RViz
            </span>
            <div className="ml-auto mr-[7px] flex gap-3">
              {['M7.500 13h7', 'M7.500 9.500h5.500v5.500h-5.500z M9.500 9.500v-2h5.500v5.500h-2', 'M7.500 7.500l7.500 7.500M15 7.500l-7.500 7.500'].map((d, i) => (
                <svg key={i} viewBox="0 0 22 22" className="h-[22px] w-[22px]">
                  <circle cx="11" cy="11" r="11" fill="#dcdcdc" />
                  <path d={d} fill="none" stroke="#333" strokeWidth="1.200" />
                </svg>
              ))}
            </div>
          </div>
          <nav className="flex h-[22px] shrink-0 items-center gap-[15px] border-b border-[#d0d0d0] pl-[10px]">
            {['File', 'Panels', 'Help'].map((m) => (
              <span key={m} className="tracking-[0.1px]">
                <span className="underline underline-offset-2">{m[0]}</span>
                {m.slice(1)}
              </span>
            ))}
          </nav>
          <Toolbar />
          <div className="mt-px flex h-[806px] shrink-0">
            <DisplaysPanel />
            <div className="relative flex w-[31px] items-center justify-center pb-[6px]">
              <span className="mr-[4px]"><Tri dir="left" /></span>
              <span className="absolute left-0.5 top-[392px]"><Dots cls="flex-col" /></span>
            </div>
            <Viewport />
            <div className="relative flex w-[31px] items-center justify-center pb-[6px]">
              <span className="ml-[2px]"><Tri dir="right" /></span>
              <span className="absolute right-0.5 top-[392px]"><Dots cls="flex-col" /></span>
              <span className="absolute right-[443px] top-[802px]"><Dots cls="" /></span>
            </div>
            <ViewsPanel />
          </div>
          <PanelTitle
            title="Time"
            icon={
              <svg viewBox="0 0 18 18" className="h-[18px] w-[18px]">
                <circle cx="9" cy="9" r="7.200" fill="#fff" stroke="#555" strokeWidth="1.600" />
                <path d="M9 4.500V9.500H12.500" fill="none" stroke="#222" strokeWidth="1.300" />
              </svg>
            }
          />
          <div className="mt-[21px] flex h-[25px] shrink-0 items-center pl-[11px]">
            <Field label="ROS Time:" value="670.28" gap="w-[76px]" />
            <Field label="ROS Elapsed:" value="201.66" gap="ml-[6px] w-[96px]" />
            <Field label="Wall Time:" value="1675077038.98" gap="ml-[6px] w-[77px]" />
            <Field label="Wall Elapsed:" value="263.49" gap="ml-[6px] w-[96px]" />
            <span className="ml-auto mr-[17px] flex items-center gap-[5px] pt-px">
              <Check on={false} />
              <span className="pt-px">Experimental</span>
            </span>
          </div>
          <div className="mt-[25px] flex h-[24px] shrink-0 items-center pl-[2px] pr-px">
            <Button label="Reset" cls="w-[53px]" />
            <span className="mb-0.5 ml-[6px] flex-1 whitespace-nowrap tracking-[0.07px]">
              <b>Left-Click:</b> Rotate. <b>Middle-Click:</b> Move X/Y. <b>Right-Click/Mouse Wheel:</b> Zoom. <b>Shift:</b> More options.
            </span>
            <span className="mb-[7px]">16 fps</span>
          </div>
        </div>
      </div>
    </div>
  );
}
